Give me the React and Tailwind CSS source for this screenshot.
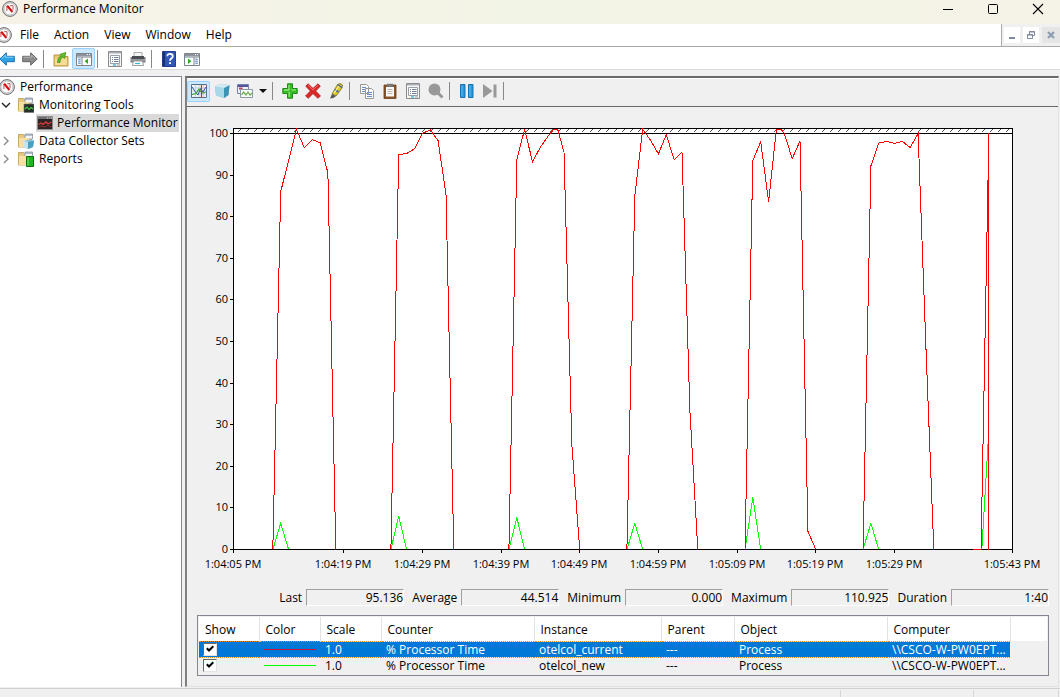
import React from "react";

const PLOT = { left: 46, right: 825, top: 21, full: 26, zero: 442 };
const SAMPLES = 99;

const xAt = (i) => PLOT.left + (i * (PLOT.right - PLOT.left)) / SAMPLES;
const yAt = (v) => PLOT.zero - (v * (PLOT.zero - PLOT.full)) / 100;
const toPoints = (series) =>
  series.map(([i, v]) => `${xAt(i).toFixed(1)},${yAt(v).toFixed(1)}`).join(" ");

const CURRENT = [
  [[5, 0], [6, 86], [7, 93.5], [8, 101], [9, 96.6], [10, 98.5], [11, 97.8], [12, 90.5], [13, 0]],
  [[20, 0], [21, 94.9], [22, 95.2], [23, 96.3], [24, 100], [25, 100.9], [26, 98.3], [27, 85.3], [28, 0]],
  [[35, 0], [36, 93.7], [37, 101], [38, 93.2], [39, 96.7], [40, 99.4], [40.7, 101], [41.2, 101], [42, 95.5], [43, 25], [44, 0]],
  [[50, 0], [51, 85], [52, 101], [53, 98.4], [54, 95.1], [55, 99.7], [56, 93.7], [57, 95.5], [58, 33.4], [59, 0]],
  [[65, 0], [66, 93.5], [67, 98], [68, 83.6], [69, 101], [69.6, 101], [70, 100], [71, 94], [72, 98.2], [73, 4.4], [74, 0]],
  [[80, 0], [81, 92.2], [82, 97.7], [83, 98.1], [84, 97.6], [85, 98.1], [86, 96.6], [87, 100], [88, 48.8], [89, 0]],
  [[95, 0], [96, 100], [96, 0]],
];

const NEXT = [
  [[5, 0], [6, 6.3], [7, 0]],
  [[20, 0], [21, 8], [22, 0]],
  [[35, 0], [36, 7.7], [37, 0]],
  [[50, 0], [51, 6.3], [52, 0]],
  [[65, 0], [66, 12.5], [67, 0]],
  [[80, 0], [81, 6.3], [82, 0]],
  [[95.1, 0], [96, 29]],
];

const TIMES = [
  [0, "1:04:05 PM"],
  [14, "1:04:19 PM"],
  [24, "1:04:29 PM"],
  [34, "1:04:39 PM"],
  [44, "1:04:49 PM"],
  [54, "1:04:59 PM"],
  [64, "1:05:09 PM"],
  [74, "1:05:19 PM"],
  [84, "1:05:29 PM"],
  [99, "1:05:43 PM"],
];

const LEVELS = [0, 10, 20, 30, 40, 50, 60, 70, 80, 90, 100];

const STATS = [
  ["Last", "95.136"],
  ["Average", "44.514"],
  ["Minimum", "0.000"],
  ["Maximum", "110.925"],
  ["Duration", "1:40"],
];

const HEADERS = ["Show", "Color", "Scale", "Counter", "Instance", "Parent", "Object", "Computer"];

const ROWS = [
  { color: "#d01030", selected: true, cells: ["1.0", "% Processor Time", "otelcol_current", "---", "Process", "\\\\CSCO-W-PW0EPT..."] },
  { color: "#00ff00", selected: false, cells: ["1.0", "% Processor Time", "otelcol_new", "---", "Process", "\\\\CSCO-W-PW0EPT..."] },
];

function Icon({ children, size = "size-4" }) {
  return (
    <svg viewBox="0 0 16 16" className={`${size} shrink-0`} aria-hidden="true">
      {children}
    </svg>
  );
}

function GaugeIcon() {
  return (
    <Icon>
      <circle cx="8" cy="8" r="7.4" fill="#dcdcdc" stroke="#6f6f6f" strokeWidth="1" />
      <circle cx="8" cy="8" r="5.900" fill="#fff" stroke="#b4b4b4" strokeWidth=".7" />
      <path d="M4.900 5v5" fill="none" stroke="#e06060" strokeWidth="1.200" />
      <path d="M5.200 4.600 10.400 11" fill="none" stroke="#d01010" strokeWidth="2.100" />
      <path d="M8.200 4.700h2.800v4.500" fill="none" stroke="#b85050" strokeWidth="1" />
    </Icon>
  );
}

function Arrow({ forward }) {
  const fill = forward ? "#8a8a8a" : "#2ba3e6";
  const edge = forward ? "#666" : "#1b6fae";
  return (
    <Icon>
      <g transform={forward ? "translate(16 0) scale(-1 1)" : undefined}>
        <path d="M.8 8 7.3 1.8v3.500h8v5.400h-8v3.500z" fill={fill} stroke={edge} strokeWidth="1" strokeLinejoin="round" />
        <path d="M2.800 7.600 6.400 4.200v2h8" fill="none" stroke={forward ? "#b5b5b5" : "#8bd6f8"} strokeWidth="1" />
      </g>
    </Icon>
  );
}

function FolderUpIcon() {
  return (
    <Icon>
      <path d="M1 4h5l1 1.500h8V15H1z" fill="#ecc874" stroke="#b58d3c" strokeWidth=".9" />
      <path d="M2 7.500h12V14H2z" fill="#f6dc95" />
      <path d="M4.500 11.500c.2-4 1.500-5.800 3.600-6.400L6.800 3.400l6-2-1.300 6-1.500-1.400C8.300 6.600 7.500 8.500 7 11.500z" fill="#5fbf27" stroke="#3b8a17" strokeWidth=".7" />
    </Icon>
  );
}

function PaneIcon({ mirrored }) {
  return (
    <Icon>
      <g transform={mirrored ? "translate(16 0) scale(-1 1)" : undefined}>
        <path d="M.5 2.500h15v12H.5z" fill="#fff" stroke="#7c828a" />
        <path d="M1 3h14v2.200H1z" fill="#8d949d" />
        <path d="M6 6v8.500M1 6h14" stroke="#7c828a" />
        <path d="M2.200 8.200h2.500M2.200 10.200h2.500M2.200 12.200h2.500" stroke="#4475b5" />
        <path d="M12 7.500v5.500L8.600 10.200z" fill="#32a81e" />
      </g>
      <path d="M11 3.500h1M13 3.500h1" stroke="#fff" />
    </Icon>
  );
}

function PropertiesIcon() {
  return (
    <Icon>
      <path d="M1.500.5h13v15h-13z" fill="#f7f7f7" stroke="#8a8a8a" />
      <path d="M2 1h12v1.500H2z" fill="#aab0b8" />
      <path d="M3.500 4.500h9v8h-9z" fill="#fff" stroke="#9aa0a8" />
      <path d="M5 6.500h1M7 6.500h4.500M5 8.500h1M7 8.500h4.500M5 10.500h1M7 10.500h4.500" stroke="#6f7f92" />
      <path d="M6 14h3" stroke="#40b5cf" strokeWidth="1.400" />
      <path d="M10 14h3" stroke="#b5b5b5" strokeWidth="1.400" />
    </Icon>
  );
}

function PrinterIcon() {
  return (
    <Icon>
      <path d="M4 1.500h8v5H4z" fill="#f5f5f5" stroke="#999" strokeWidth=".8" />
      <path d="M.5 6h15v5.500H.5z" fill="#777b80" />
      <path d="M2 5h12v3H2z" fill="#4b4e52" />
      <path d="M1 9h14" stroke="#b9bcbf" />
      <path d="M3.500 10h9l1 4.500h-11z" fill="#fff" stroke="#888" strokeWidth=".8" />
      <path d="M5 12.500h5" stroke="#38b8cf" strokeWidth="1.200" />
    </Icon>
  );
}

function HelpIcon() {
  return (
    <Icon>
      <path d="M1.500.5h13v15h-13z" fill="#3157b7" stroke="#20408f" />
      <path d="M2 1h2v14H2z" fill="#16307c" />
      <path d="M6.300 5.200C6.300 3.500 7.400 2.800 9 2.800s2.800.9 2.800 2.400C11.800 7.300 9 7.300 9 9.800" fill="none" stroke="#fff" strokeWidth="1.700" />
      <path d="M8.100 11.200h1.900v1.900H8.100z" fill="#fff" />
    </Icon>
  );
}

function ToolsFolder({ kind }) {
  return (
    <Icon>
      <path d="M.5 1.500h5l1 1.500h7v11H.5z" fill="#e8c877" stroke="#c29b4b" strokeWidth=".8" />
      <path d="M7 1h7.500v5H7z" fill="#f2f5f8" stroke="#8a95a3" strokeWidth=".8" />
      <path d="M7 2h7.500" stroke="#7d8da3" />
      <path d="M1 5h10v9H1z" fill="#f8e0a0" />
      {kind === "tools" && (
        <>
          <path d="M6 7h10v8.500H6z" fill="#253029" stroke="#777" strokeWidth=".6" />
          <path d="m7 12 2-2 2 2.500 2-2 2 1.500" fill="none" stroke="#40d040" strokeWidth="1.100" />
        </>
      )}
      {kind === "sets" && (
        <>
          <path d="m6 8 5-1.500 5 1-1 6.500-5 2-4-1.500z" fill="#8cc5dc" />
          <path d="m6 8 4 1v7l-4-1.500z" fill="#c4e4ef" />
          <path d="m10 9 6-1.500-1 6.500-5 2z" fill="#4b9fbf" />
        </>
      )}
      {kind === "reports" && (
        <path d="M8.500 5.500h7v10h-7z" fill="#1fb51f" stroke="#0b6f10" />
      )}
      {kind === "reports" && <path d="M10 6.500v8" stroke="#7ae57a" />}
    </Icon>
  );
}

function MonitorIcon() {
  return (
    <Icon>
      <path d="M.5 1.500h15v13H.5z" fill="#2c2424" stroke="#8c8c8c" />
      <path d="M1 2h14v2H1z" fill="#6f7277" />
      <path d="M10 3h1M12 3h1M14 3h1" stroke="#ddd" />
      <path d="M1.500 9.500 4 8l2 1.500L9 7l2 2 3.500-2" fill="none" stroke="#e23b3b" strokeWidth="1.300" />
      <path d="m1.500 12 3-1 3 1 3-1.500 4 1" fill="none" stroke="#992c2c" strokeWidth=".9" />
    </Icon>
  );
}

function ViewGraphIcon() {
  return (
    <Icon>
      <path d="M.5 1.500h15v13H.5z" fill="#eef4fa" stroke="#5d7186" />
      <path d="M1 5h14M1 8h14M1 11h14M4.500 2v12M8 2v12M12.500 2v12" stroke="#b6c6d8" strokeWidth=".7" />
      <path d="m1 4 3.500 5L7 12l2.500-6.500L12 9l3-5" fill="none" stroke="#3159a8" strokeWidth="1" />
      <path d="m1 11.500 4-1L8 6l3 4 4-1" fill="none" stroke="#32a532" strokeWidth="1.200" />
      <path d="M10.500 2v12.500" stroke="#d83030" strokeWidth="1.200" />
    </Icon>
  );
}

function CubeIcon() {
  return (
    <Icon>
      <path d="M1 3.500 6 1l9.500 1-1 10L10 15l-8-2.500z" fill="#7fbdd6" />
      <path d="M1 3.500 10 5v10l-8-2.500z" fill="#a9d8e8" />
      <path d="M10 5l5.500-3-1 10L10 15z" fill="#3d93b5" />
      <path d="M1 3.500 6 1l9.500 1L10 5z" fill="#d3ecf4" />
    </Icon>
  );
}

function GraphTypeIcon() {
  return (
    <Icon>
      <path d="M.5 1.500h11v9H.5z" fill="#eef1f8" stroke="#777fae" />
      <path d="M1 2h10v2H1z" fill="#50559c" />
      <path d="M2 4.500h3.500v2H2z" fill="#c43b52" />
      <path d="M3.500 6.500h12v8h-12z" fill="#fafcf7" stroke="#8b9aa8" />
      <path d="m4.500 12 2-3 2.500 3 2-3 2 3 2-2" fill="none" stroke="#6aa84f" strokeWidth="1.200" />
    </Icon>
  );
}

function PlusIcon() {
  return (
    <Icon>
      <path d="M5.500.8h5v4.700h4.700v5h-4.700v4.700h-5v-4.700H.8v-5h4.700z" fill="#35bd23" stroke="#1c8a15" strokeLinejoin="round" />
      <path d="M7 2v5H2M9.500 6.800h4.500M7.200 9v5" fill="none" stroke="#8fe57a" strokeWidth="1.300" />
    </Icon>
  );
}

function DeleteIcon() {
  return (
    <Icon>
      <path d="M3 .8 8 5.400 13 .8l2.300 2.400L10.600 8l4.900 4.900-2.600 2.400L8 10.600l-4.800 4.700-2.600-2.400L5.400 8 .8 3.200z" fill="#dc2626" stroke="#b51a1a" strokeWidth=".8" strokeLinejoin="round" />
      <path d="m3 2.200 5 4.800 5-4.800" fill="none" stroke="#f26b6b" />
    </Icon>
  );
}

function MarkerIcon() {
  return (
    <Icon>
      <path d="M9.500 1.500 12 .5l2.500 1.500-.5 3-6 8-4-2z" fill="#dcc62c" stroke="#77701e" strokeWidth=".8" />
      <path d="m4 11 4 2-2.500 2-3.500.5z" fill="#56585e" />
      <path d="m6.500 6.500 4 2.500M9.500 1.500l4.500 3" stroke="#3e62a8" strokeWidth="1.500" />
      <path d="M11 3 6 10" stroke="#fff4a0" strokeWidth="1.200" />
    </Icon>
  );
}

function CopyIcon() {
  return (
    <Icon>
      <path d="M1.500 1.500h6l2 2v7h-8zM6.500 5.500h6l2 2v8h-8z" fill="#fbfbfb" stroke="#999" />
      <path d="M3 4.500h4M3 6.500h3M3 8.500h3M8 9.500h5M8 11.500h5M8 13.500h5" stroke="#6b8fc0" />
    </Icon>
  );
}

function PasteIcon() {
  return (
    <Icon>
      <path d="M2 2h12v13.500H2z" fill="#8b5529" stroke="#6a3d1a" strokeWidth=".8" />
      <path d="M4 4h8v9.500H4z" fill="#f9f9f9" />
      <path d="M5 .8h6V4H5z" fill="#777" />
      <path d="M5.500 6.500h5M5.500 8.500h5M5.500 10.500h5" stroke="#b3b7bd" />
    </Icon>
  );
}

function LensIcon() {
  return (
    <Icon>
      <path d="m9 9 5.500 5.500" stroke="#989898" strokeWidth="3" />
      <circle cx="6.500" cy="6.500" r="6" fill="#999" />
    </Icon>
  );
}

function PauseIcon() {
  return (
    <Icon>
      <path d="M1.500 1.500h4.500v13H1.500zM9.500 1.500H14v13H9.500z" fill="#2a97dc" stroke="#1972ae" />
      <path d="M3 2.500v11M11 2.500v11" stroke="#62bdf0" />
    </Icon>
  );
}

function StepIcon() {
  return (
    <Icon>
      <path d="M1 1l9.500 7L1 15z" fill="#999" />
      <path d="M11.500 1.500h3v13h-3z" fill="#999" />
    </Icon>
  );
}

function ToolButton({ label, active, children }) {
  return (
    <button
      type="button"
      aria-label={label}
      className={`flex h-[21px] w-[23px] shrink-0 items-center justify-center rounded-xs border ${
        active ? "border-[#99d1ff] bg-[#cce8ff]" : "border-transparent"
      }`}
    >
      {children}
    </button>
  );
}

function Divider() {
  return <span className="mr-[5px] ml-[2px] h-[18px] w-px shrink-0 bg-[#888]" />;
}

function TitleBar() {
  return (
    <header className="flex h-6 items-start justify-between bg-linear-to-r from-[#f7f2e8] via-[#f2f4e6] to-[#f5f3e7] pt-px">
      <div className="flex items-center gap-[5px] pl-[2px]">
        <GaugeIcon />
        <h1 className="leading-4">Performance Monitor</h1>
      </div>
      <div className="flex gap-[25px] pr-3">
        <button type="button" aria-label="Minimize" className="flex h-4 w-5 items-center justify-center">
          <svg viewBox="0 0 12 12" className="size-3" shapeRendering="crispEdges"><path d="M1 6.500h10" stroke="#000" /></svg>
        </button>
        <button type="button" aria-label="Maximize" className="flex h-4 w-5 items-center justify-center">
          <svg viewBox="0 0 12 12" className="size-3"><rect x="1.500" y="1.500" width="9" height="9" rx="1" fill="none" stroke="#000" /></svg>
        </button>
        <button type="button" aria-label="Close" className="flex h-4 w-5 items-center justify-center">
          <svg viewBox="0 0 12 12" className="size-3"><path d="m1 1 10 10M11 1 1 11" stroke="#000" strokeWidth="1.100" /></svg>
        </button>
      </div>
    </header>
  );
}

function MenuBar() {
  return (
    <div className="flex h-[23px] justify-between border-b border-[#a9a9a9] bg-white">
      <nav className="-ml-1 flex items-center">
        <GaugeIcon />
        <div className="flex gap-[15px] pl-2">
          {["File", "Action", "View", "Window", "Help"].map((m) => (
            <button type="button" key={m}>{m}</button>
          ))}
        </div>
      </nav>
      <div className="flex items-center gap-[3px] border-l border-[#a9a9a9] bg-[#f0f0f0] pl-[2px]">
        <button type="button" aria-label="Minimize window" className="flex h-4 w-4 items-center justify-center bg-white">
          <svg viewBox="0 0 10 10" className="size-[10px]"><path d="M2 8h6" stroke="#7c8a9b" strokeWidth="2" /></svg>
        </button>
        <button type="button" aria-label="Restore window" className="flex h-4 w-4 items-center justify-center bg-white">
          <svg viewBox="0 0 10 10" className="size-[10px]"><path d="M3.500 4V1.500h5v4H6.500M1.500 4.500h5v4h-5zM3 2h6M1 5h6" fill="none" stroke="#7c8a9b" /></svg>
        </button>
        <button type="button" aria-label="Close window" className="flex h-4 w-[18px] items-center justify-center bg-[#e5e5e5]">
          <svg viewBox="0 0 10 10" className="size-[10px]"><path d="m2 2 6 6M8 2 2 8" stroke="#8c9db0" strokeWidth="2.200" /></svg>
        </button>
      </div>
    </div>
  );
}

function MainToolbar() {
  return (
    <div className="flex h-[23px] items-center border-b border-[#dadada] bg-white pt-px">
      <div className="-ml-[5px] flex items-center">
        <ToolButton label="Back"><Arrow /></ToolButton>
        <ToolButton label="Forward"><Arrow forward /></ToolButton>
      </div>
      <Divider />
      <ToolButton label="Up one level"><FolderUpIcon /></ToolButton>
      <ToolButton label="Show or hide console tree" active><PaneIcon /></ToolButton>
      <Divider />
      <ToolButton label="Properties"><PropertiesIcon /></ToolButton>
      <ToolButton label="Print"><PrinterIcon /></ToolButton>
      <Divider />
      <ToolButton label="Help"><HelpIcon /></ToolButton>
      <ToolButton label="Show or hide action pane"><PaneIcon mirrored /></ToolButton>
    </div>
  );
}

function Chevron({ open }) {
  return (
    <svg viewBox="0 0 10 10" className="size-[10px] shrink-0" aria-hidden="true">
      <path d={open ? "m1 3 4 4 4-4" : "m3 1 4 4-4 4"} fill="none" stroke={open ? "#222" : "#8a8a8a"} strokeWidth="1.400" />
    </svg>
  );
}

function TreePane() {
  return (
    <aside className="w-[182px] shrink-0 border-t border-r border-[#828790] bg-white">
      <ul className="pt-px">
        <li>
          <button type="button" className="-ml-px flex h-[18px] items-center gap-[5px]"><GaugeIcon />Performance</button>
          <ul>
            <li>
              <button type="button" aria-expanded="true" className="flex h-[18px] items-center pl-px">
                <Chevron open />
                <span className="flex items-center gap-[5px] pl-[7px]"><ToolsFolder kind="tools" />Monitoring Tools</span>
              </button>
              <ul className="pl-9">
                <li>
                  <button type="button" className="flex h-[18px] items-center gap-1 bg-[#d9d9d9] pr-px pl-px whitespace-nowrap"><MonitorIcon />Performance Monitor</button>
                </li>
              </ul>
            </li>
            <li>
              <button type="button" aria-expanded="false" className="flex h-[18px] items-center pl-px">
                <Chevron />
                <span className="flex items-center gap-[5px] pl-[7px]"><ToolsFolder kind="sets" />Data Collector Sets</span>
              </button>
            </li>
            <li>
              <button type="button" aria-expanded="false" className="flex h-[18px] items-center pl-px">
                <Chevron />
                <span className="flex items-center gap-[5px] pl-[7px]"><ToolsFolder kind="reports" />Reports</span>
              </button>
            </li>
          </ul>
        </li>
      </ul>
    </aside>
  );
}

function GraphToolbar() {
  return (
    <div className="flex h-7 items-center border-b border-[#696969] pb-[3px]">
      <ToolButton label="View current activity" active><ViewGraphIcon /></ToolButton>
      <ToolButton label="View log data"><CubeIcon /></ToolButton>
      <ToolButton label="Change graph type"><GraphTypeIcon /></ToolButton>
      <button type="button" aria-label="Graph types" className="flex h-5 w-[14px] items-center justify-center">
        <svg viewBox="0 0 8 4" className="h-1 w-2"><path d="M0 0h8L4 4z" fill="#111" /></svg>
      </button>
      <Divider />
      <ToolButton label="Add counter"><PlusIcon /></ToolButton>
      <ToolButton label="Delete counter"><DeleteIcon /></ToolButton>
      <ToolButton label="Highlight"><MarkerIcon /></ToolButton>
      <Divider />
      <ToolButton label="Copy properties"><CopyIcon /></ToolButton>
      <ToolButton label="Paste counter list"><PasteIcon /></ToolButton>
      <ToolButton label="Properties"><PropertiesIcon /></ToolButton>
      <ToolButton label="Zoom"><LensIcon /></ToolButton>
      <Divider />
      <ToolButton label="Freeze display"><PauseIcon /></ToolButton>
      <ToolButton label="Update data"><StepIcon /></ToolButton>
      <Divider />
    </div>
  );
}

function Graph() {
  const { left, right, top, full, zero } = PLOT;
  const hatch = [];
  for (let x = left + 4; x < right - 4; x += 8) hatch.push(`M${x} ${full - 1}l4 -4`);
  return (
    <svg viewBox="0 0 871 466" className="block h-auto w-full text-[11px]" role="img" aria-label="Processor time graph">
      <rect x={left} y={top} width={right - left} height={zero - top} fill="#fff" />
      <g shapeRendering="crispEdges" fill="none" stroke="#000" transform="translate(0.5 0.5)">
        <path d={hatch.join("")} stroke="#555" />
        <path d={`M${left} ${zero}V${top}H${right}V${zero}ZM${left} ${full}H${right}`} />
        {LEVELS.map((v) => (
          <path key={v} d={`M${left - 4} ${Math.round(yAt(v))}h4`} />
        ))}
        {TIMES.map(([i]) => (
          <path key={i} d={`M${Math.round(xAt(i))} ${zero}v3`} />
        ))}
        {NEXT.map((s, k) => (
          <polyline key={k} points={toPoints(s)} stroke="#00ff00" />
        ))}
        {CURRENT.map((s, k) => (
          <polyline key={k} points={toPoints(s)} stroke="#ff0000" />
        ))}
        <path d={`M${left} ${zero}H${xAt(94)}M${xAt(96)} ${zero}H${right}`} />
        <path d={`M${xAt(94)} ${zero}H${xAt(95)}`} stroke="#ff0000" />
      </g>
      {LEVELS.map((v) => (
        <text key={v} x={left - 5} y={Math.round(yAt(v)) + 4} textAnchor="end">{v}</text>
      ))}
      {TIMES.map(([i, label]) => (
        <text key={i} x={Math.round(xAt(i))} y={zero + 19} textAnchor="middle">{label}</text>
      ))}
    </svg>
  );
}

function Stats() {
  return (
    <dl className="flex justify-end gap-2 pt-4 pr-[9px]">
      {STATS.map(([name, value]) => (
        <div key={name} className="flex items-center gap-1">
          <dt>{name}</dt>
          <dd className="h-[17px] w-[98px] border border-t-[#a0a0a0] border-r-white border-b-white border-l-[#a0a0a0] text-right leading-4">{value}</dd>
        </div>
      ))}
    </dl>
  );
}

function CounterTable() {
  return (
    <div className="mt-[9px] mr-[9px] ml-[10px] h-[61px] overflow-hidden border border-[#828790] p-px">
      <table className="w-full table-fixed border-collapse text-left">
        <colgroup>
          <col className="w-[60px]" />
          <col className="w-[61px]" />
          <col className="w-[61px]" />
          <col className="w-[153px]" />
          <col className="w-[127px]" />
          <col className="w-[73px]" />
          <col className="w-[153px]" />
          <col className="w-[123px]" />
          <col />
        </colgroup>
        <thead>
          <tr className="h-6 bg-white">
            {HEADERS.map((h) => (
              <th key={h} className="border-r border-[#e2e2e2] p-0 pt-[2px] pl-[6px] font-normal">{h}</th>
            ))}
            <td className="p-0" />
          </tr>
        </thead>
        <tbody>
          {ROWS.map((r) => (
            <tr key={r.cells[2]} className={`h-[15px] leading-[15px] ${r.selected ? "text-white" : "text-black"}`}>
              <td className={`p-0 pl-1 ${r.selected ? "border-y border-dotted border-[#e08a2a] bg-[#0078d7]" : ""}`}>
                <label className="relative block h-[13px] w-[14px]">
                  <input
                    type="checkbox"
                    defaultChecked
                    aria-label={`Show ${r.cells[2]}`}
                    className="block h-[13px] w-[14px] appearance-none border border-t-[#696969] border-r-[#e3e3e3] border-b-[#e3e3e3] border-l-[#696969] bg-white"
                  />
                  <svg viewBox="0 0 8 8" className="pointer-events-none absolute top-[2px] left-[3px] size-2">
                    <path d="m.8 3.200 2.200 2.300L7.300 1.200" fill="none" stroke="#000" strokeWidth="2" />
                  </svg>
                </label>
              </td>
              <td className={`p-0 pr-1 pl-[5px] ${r.selected ? "border-y border-dotted border-[#e08a2a] bg-[#0078d7]" : ""}`}>
                <svg viewBox="0 0 53 3" preserveAspectRatio="none" className="block h-[3px] w-full" shapeRendering="crispEdges" aria-hidden="true">
                  <path d="M0 1h53v1H0z" fill={r.color} />
                </svg>
              </td>
              {r.cells.map((c, k) => (
                <td
                  key={k}
                  className={`truncate p-0 pl-[5px] ${r.selected ? "border-y border-dotted border-[#e08a2a] bg-[#0078d7]" : ""}`}
                >
                  {c}
                </td>
              ))}
              <td className="p-0" />
            </tr>
          ))}
        </tbody>
      </table>
    </div>
  );
}

export default function App() {
  return (
    <div className="flex min-h-screen flex-col overflow-hidden bg-[#f0f0f0] font-['Open_Sans','Noto_Sans',sans-serif] text-[12px] leading-4 text-black">
      <TitleBar />
      <MenuBar />
      <MainToolbar />
      <div className="flex grow pt-[6px]">
        <TreePane />
        <main className="mr-px ml-[3px] flex min-w-0 grow flex-col border-t-2 border-r border-b border-l-2 border-t-[#696969] border-r-[#e3e3e3] border-b-[#e3e3e3] border-l-[#808080]">
          <div className="border-t border-white" />
          <GraphToolbar />
          <Graph />
          <Stats />
          <CounterTable />
        </main>
      </div>
      <footer className="mt-px flex h-[9px] justify-end border-t border-[#d0d0d0] pt-px">
        <span className="w-[133px] border-l border-[#d7d7d7]" />
        <span className="mr-px w-[86px] border-x border-[#d7d7d7]" />
      </footer>
    </div>
  );
}
